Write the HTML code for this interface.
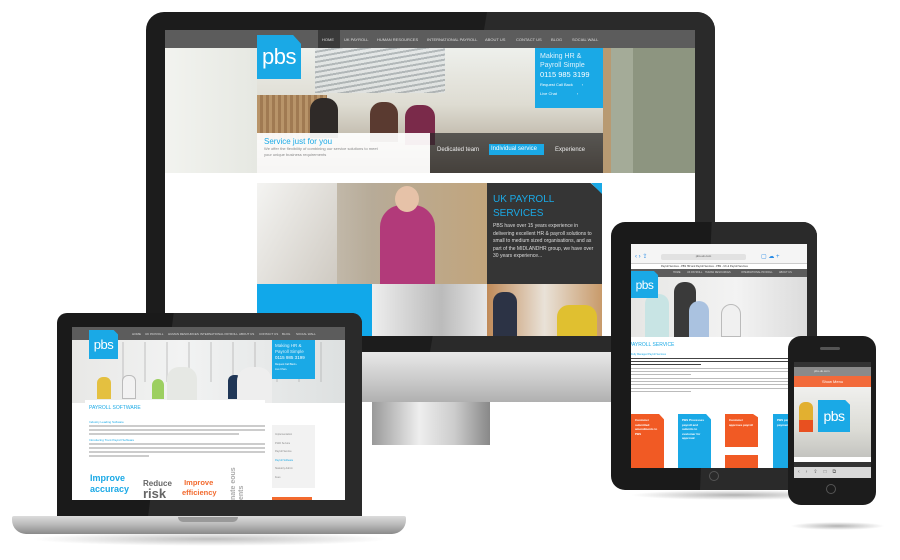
<!DOCTYPE html>
<html><head><meta charset="utf-8"><style>
*{margin:0;padding:0;box-sizing:border-box}
body{width:900px;height:560px;background:#fff;position:relative;overflow:hidden;font-family:"Liberation Sans",sans-serif}
.a{position:absolute}
.n{position:absolute;font-size:4px;color:#ddd;white-space:nowrap}
.n3{position:absolute;font-size:3px;color:#ddd;white-space:nowrap}
.logo{background:#1aa9e6;color:#fff;font-family:"Liberation Sans",sans-serif;display:flex;align-items:center;justify-content:center;letter-spacing:-0.5px}
.line{position:absolute;height:1.5px;background:#bbb}
</style></head><body>

<!-- monitor stand -->
<div class="a" style="left:372px;top:400px;width:118px;height:45px;background:linear-gradient(90deg,#999,#eee 40%,#ccc 70%,#888)"></div>
<!-- monitor -->
<div class="a" style="left:146px;top:12px;width:569px;height:340px;background:#1c1c1c;border-radius:18px 18px 0 0"></div>
<div class="a" style="left:430px;top:12px;width:285px;height:340px;background:#2a2a2a;border-radius:0 18px 0 0;clip-path:polygon(20% 0,100% 0,100% 100%,0 100%)"></div>
<div class="a" style="left:146px;top:352px;width:569px;height:50px;background:linear-gradient(#e8e8e8,#c8c8c8 60%,#b0b0b0)"></div>
<!-- monitor screen -->
<div class="a" style="left:165px;top:30px;width:530px;height:306px;background:#fff;overflow:hidden">
 <div class="a" style="left:0;top:0;width:530px;height:18px;background:#5c5c5c"></div>
 <div class="a" style="left:153px;top:0;width:22px;height:18px;background:#3a3a3a"></div>
 <div class="n" style="left:157px;top:7px">HOME</div>
 <div class="n" style="left:179px;top:7px">UK PAYROLL</div>
 <div class="n" style="left:212px;top:7px">HUMAN RESOURCES</div>
 <div class="n" style="left:262px;top:7px">INTERNATIONAL PAYROLL</div>
 <div class="n" style="left:320px;top:7px">ABOUT US</div>
 <div class="n" style="left:351px;top:7px">CONTACT US</div>
 <div class="n" style="left:386px;top:7px">BLOG</div>
 <div class="n" style="left:407px;top:7px">SOCIAL WALL</div>
 <!-- hero -->
 <div class="a" style="left:0;top:18px;width:92px;height:125px;background:linear-gradient(90deg,#f2f3ef,#e6e8e2)"></div>
 <div class="a" style="left:92px;top:18px;width:346px;height:125px;background:linear-gradient(180deg,#eef0ec,#dedcd2 45%,#c4bdb0 70%,#8a7a6a)"></div>
 <div class="a" style="left:150px;top:18px;width:130px;height:45px;background:repeating-linear-gradient(170deg,#dfe3e4 0 3px,#9aa2a6 3px 5px);opacity:.7"></div>
 <div class="a" style="left:92px;top:65px;width:70px;height:45px;background:repeating-linear-gradient(90deg,#b89469 0 3px,#a07a52 3px 6px)"></div>
 <div class="a" style="left:145px;top:68px;width:28px;height:40px;background:#2f2a28;border-radius:12px 12px 0 0"></div>
 <div class="a" style="left:205px;top:72px;width:28px;height:40px;background:#5a3a30;border-radius:12px 12px 0 0"></div>
 <div class="a" style="left:240px;top:75px;width:30px;height:40px;background:#7a2a4a;border-radius:12px 12px 0 0"></div>
 <div class="a" style="left:438px;top:18px;width:92px;height:125px;background:linear-gradient(90deg,#b89a72 0 8px,#a4ab98 8px 30px,#8d9580 30px)"></div>
 <div class="a logo" style="left:92px;top:5px;width:44px;height:44px;font-size:22px;clip-path:polygon(0 0,82% 0,100% 20%,100% 100%,0 100%)">pbs</div>
 <div class="a" style="left:370px;top:18px;width:68px;height:60px;background:#1aa9e6;padding:4px 5px;color:#fff">
  <div style="font-size:7px;color:#dff2fc;line-height:9px">Making HR &amp;<br>Payroll Simple</div>
  <div style="font-size:7.5px;line-height:9px">0115 985 3199</div>
  <div style="font-size:4px;margin-top:3px">Request Call Back &nbsp;&nbsp;&nbsp;&nbsp;&nbsp;&nbsp;&nbsp;›</div>
  <div style="font-size:4px;margin-top:4px">Live Chat &nbsp;&nbsp;&nbsp;&nbsp;&nbsp;&nbsp;&nbsp;&nbsp;&nbsp;&nbsp;&nbsp;&nbsp;&nbsp;&nbsp;&nbsp;&nbsp;&nbsp;›</div>
 </div>
 <div class="a" style="left:92px;top:103px;width:173px;height:40px;background:rgba(255,255,255,.93);padding:4px 7px">
  <div style="font-size:8px;color:#1aa9e6">Service just for you</div>
  <div style="font-size:4px;color:#888;line-height:6px">We offer the flexibility of combining our service solutions to meet<br>your unique business requirements</div>
 </div>
 <div class="a" style="left:265px;top:103px;width:173px;height:40px;background:rgba(40,40,40,.7)"></div>
 <div class="a" style="left:272px;top:117px;font-size:6px;color:#eee">Dedicated team</div>
 <div class="a" style="left:324px;top:114px;width:55px;height:11px;background:#1aa9e6;font-size:6px;color:#fff;padding:2px">Individual service</div>
 <div class="a" style="left:390px;top:117px;font-size:6px;color:#eee">Experience</div>
 <!-- lower -->
 <div class="a" style="left:92px;top:153px;width:230px;height:101px;background:linear-gradient(90deg,#d9d6cf,#b7ab98 50%,#c2a57c)"></div>
 <div class="a" style="left:92px;top:153px;width:80px;height:101px;background:linear-gradient(120deg,#f4f4f2,#cfcac2)"></div>
 <div class="a" style="left:215px;top:175px;width:55px;height:79px;background:#b23a7a;border-radius:22px 22px 0 0"></div>
 <div class="a" style="left:230px;top:156px;width:24px;height:26px;background:#e6c2a8;border-radius:50%"></div>
 <div class="a" style="left:322px;top:153px;width:115px;height:101px;background:#353535;padding:10px 6px;clip-path:polygon(0 0,90% 0,100% 10%,100% 100%,0 100%)">
  <div style="font-size:10px;color:#1aa9e6;line-height:14px">UK PAYROLL<br>SERVICES</div>
  <div style="font-size:5px;color:#ddd;line-height:7.5px;margin-top:2px">PBS have over 15 years experience in delivering excellent HR &amp; payroll solutions to small to medium sized organisations, and as part of the MIDLANDHR group, we have over 30 years experience...</div>
 </div>
 <div class="a" style="left:426px;top:153px;width:11px;height:11px;background:#1aa9e6;clip-path:polygon(0 0,100% 0,100% 100%)"></div>
 <div class="a" style="left:92px;top:254px;width:115px;height:52px;background:#11a8ea"></div>
 <div class="a" style="left:207px;top:254px;width:115px;height:52px;background:linear-gradient(90deg,#eee,#bbb 60%,#e6e6e6)"></div>
 <div class="a" style="left:322px;top:254px;width:115px;height:52px;background:linear-gradient(90deg,#c08a58,#e9e2d8 50%,#c89a6a)"></div>
 <div class="a" style="left:328px;top:262px;width:24px;height:44px;background:#2c3345;border-radius:10px 10px 0 0"></div>
 <div class="a" style="left:392px;top:275px;width:40px;height:31px;background:#e0c030;border-radius:12px 12px 0 0"></div>
</div>

<!-- laptop -->
<div class="a" style="left:30px;top:532px;width:360px;height:14px;background:radial-gradient(ellipse,rgba(0,0,0,.25),rgba(0,0,0,0) 70%)"></div>
<div class="a" style="left:57px;top:313px;width:305px;height:204px;background:#1a1a1a;border-radius:10px 10px 0 0"></div>
<div class="a" style="left:148px;top:313px;width:214px;height:204px;background:#2a2a2a;border-radius:0 10px 0 0;clip-path:polygon(12% 0,100% 0,100% 100%,0 100%)"></div>
<div class="a" style="left:12px;top:516px;width:394px;height:18px;background:linear-gradient(#dcdcdc,#b8b8b8 50%,#8a8a8a);border-radius:2px 2px 14px 14px"></div>
<div class="a" style="left:178px;top:517px;width:60px;height:5px;background:#999;border-radius:0 0 5px 5px"></div>
<div class="a" style="left:72px;top:327px;width:273px;height:173px;background:#fff;overflow:hidden">
 <div class="a" style="left:0;top:0;width:273px;height:13px;background:#5c5c5c"></div>
 <div class="n3" style="left:60px;top:5px">HOME</div>
 <div class="n3" style="left:73px;top:5px">UK PAYROLL</div>
 <div class="n3" style="left:96px;top:5px">HUMAN RESOURCES</div>
 <div class="n3" style="left:128px;top:5px">INTERNATIONAL PAYROLL</div>
 <div class="n3" style="left:167px;top:5px">ABOUT US</div>
 <div class="n3" style="left:187px;top:5px">CONTACT US</div>
 <div class="n3" style="left:210px;top:5px">BLOG</div>
 <div class="n3" style="left:224px;top:5px">SOCIAL WALL</div>
 <div class="a" style="left:0;top:13px;width:273px;height:63px;background:linear-gradient(90deg,#e8e8e6,#f2f3f3 40%,#dde0e0)"></div>
 <div class="a" style="left:30px;top:15px;width:230px;height:40px;background:repeating-linear-gradient(90deg,transparent 0 20px,rgba(180,180,180,.4) 20px 22px)"></div>
 <div class="a" style="left:25px;top:50px;width:14px;height:22px;background:#e4c040;border-radius:6px 6px 0 0"></div>
 <div class="a" style="left:50px;top:48px;width:14px;height:24px;background:#f2f2f2;border-radius:6px 6px 0 0;border:1px solid #bbb"></div>
 <div class="a" style="left:80px;top:52px;width:12px;height:20px;background:#9ccf60;border-radius:6px 6px 0 0"></div>
 <div class="a" style="left:95px;top:40px;width:30px;height:36px;background:#e6e8e4;border-radius:12px 12px 0 0"></div>
 <div class="a" style="left:156px;top:48px;width:14px;height:24px;background:#1f3656;border-radius:6px 6px 0 0"></div>
 <div class="a" style="left:165px;top:40px;width:35px;height:36px;background:#eee;border-radius:14px 14px 0 0"></div>
 <div class="a logo" style="left:17px;top:3px;width:29px;height:29px;font-size:13px;clip-path:polygon(0 0,85% 0,100% 15%,100% 100%,0 100%)">pbs</div>
 <div class="a" style="left:200px;top:13px;width:43px;height:39px;background:#1aa9e6;padding:3px;color:#fff">
  <div style="font-size:4.5px;line-height:6px;color:#dff2fc">Making HR &amp;<br>Payroll Simple</div>
  <div style="font-size:4.5px;line-height:6px">0115 985 3199</div>
  <div style="font-size:2.5px;margin-top:2px">Request Call Back ›</div>
  <div style="font-size:2.5px;margin-top:2px">Live Chat ›</div>
 </div>
 <div class="a" style="left:13px;top:73px;width:180px;height:100px;background:#fff"></div>
 <div class="a" style="left:17px;top:78px;font-size:5px;color:#1aa9e6">PAYROLL SOFTWARE</div>
 <div class="a" style="left:17px;top:93px;font-size:3px;color:#1aa9e6">Industry Leading Software</div>
 <div class="line" style="left:17px;top:98px;width:176px;background:#ccc"></div>
 <div class="line" style="left:17px;top:102px;width:176px;background:#ccc"></div>
 <div class="line" style="left:17px;top:106px;width:150px;background:#ccc"></div>
 <div class="a" style="left:17px;top:111px;font-size:3px;color:#1aa9e6">Introducing Trent Payroll Software</div>
 <div class="line" style="left:17px;top:116px;width:176px;background:#ccc"></div>
 <div class="line" style="left:17px;top:120px;width:176px;background:#ccc"></div>
 <div class="line" style="left:17px;top:124px;width:176px;background:#ccc"></div>
 <div class="line" style="left:17px;top:128px;width:60px;background:#ccc"></div>
 <div class="a" style="left:200px;top:98px;width:43px;height:63px;background:#f2f2f2"></div>
 <div class="a" style="left:203px;top:104px;font-size:2.5px;color:#888;line-height:8.5px">Implementation<br>P11D Service<br>Payroll Service<br><span style="color:#1aa9e6">Payroll Software</span><br>Statutory Admin<br>Fees</div>
 <div class="a" style="left:200px;top:170px;width:40px;height:5px;background:#f26a2e"></div>
 <div class="a" style="left:18px;top:146px;font-size:9px;font-weight:bold;color:#1aa9e6;line-height:11px">Improve<br>accuracy</div>
 <div class="a" style="left:71px;top:152px;font-size:8px;font-weight:bold;color:#666;line-height:10px">Reduce<br><span style="font-size:13px">risk</span></div>
 <div class="a" style="left:110px;top:151px;font-size:7.5px;font-weight:bold;color:#f26a2e;line-height:10px">&nbsp;Improve<br>efficiency</div>
 <div class="a" style="left:158px;top:140px;font-size:7px;font-weight:bold;color:#aaa;writing-mode:vertical-rl;transform:rotate(180deg);line-height:8px">nate eous ents</div>
</div>

<!-- tablet -->
<div class="a" style="left:630px;top:490px;width:210px;height:10px;background:radial-gradient(ellipse,rgba(0,0,0,.3),rgba(0,0,0,0) 70%)"></div>
<div class="a" style="left:611px;top:222px;width:206px;height:268px;background:#1a1a1a;border-radius:14px"></div>
<div class="a" style="left:700px;top:222px;width:117px;height:268px;background:#2a2a2a;border-radius:0 14px 14px 0;clip-path:polygon(10% 0,100% 0,100% 100%,0 100%)"></div>
<div class="a" style="left:709px;top:471px;width:10px;height:10px;border:1px solid #555;border-radius:50%"></div>
<div class="a" style="left:631px;top:244px;width:176px;height:224px;background:#fff;overflow:hidden">
 <div class="a" style="left:0;top:0;width:176px;height:20px;background:#f5f5f5;border-bottom:1px solid #ccc"></div>
 <div class="a" style="left:30px;top:10px;width:85px;height:6px;background:#e2e2e2;border-radius:2px;font-size:3px;color:#555;text-align:center">pbs-uk.com</div>
 <div class="a" style="left:4px;top:9px;font-size:6px;color:#2a8ce6">‹ › ⇪</div>
 <div class="a" style="left:130px;top:9px;font-size:6px;color:#2a8ce6">▢ ☁ +</div>
 <div class="a" style="left:30px;top:21px;font-size:2.5px;color:#333;white-space:nowrap">Payroll Services - PBS HR and Payroll Services - PBS - UK &amp; Payroll Services</div>
 <div class="a" style="left:0;top:25px;width:176px;height:8px;background:#5c5c5c"></div>
 <div class="n3" style="left:42px;top:27px;font-size:2.5px">HOME</div>
 <div class="n3" style="left:56px;top:27px;font-size:2.5px">UK PAYROLL</div>
 <div class="n3" style="left:74px;top:27px;font-size:2.5px">HUMAN RESOURCES</div>
 <div class="n3" style="left:110px;top:27px;font-size:2.5px">INTERNATIONAL PAYROLL</div>
 <div class="n3" style="left:148px;top:27px;font-size:2.5px">ABOUT US</div>
 <div class="a" style="left:0;top:33px;width:176px;height:60px;background:linear-gradient(90deg,#e6e6e4,#f3f3f3 60%,#dcdcdc)"></div>
 <div class="a" style="left:14px;top:50px;width:24px;height:43px;background:#c8e4e4;border-radius:10px 10px 0 0"></div>
 <div class="a" style="left:43px;top:38px;width:22px;height:55px;background:#3a3a3a;border-radius:10px 10px 0 0"></div>
 <div class="a" style="left:58px;top:57px;width:20px;height:36px;background:#aac2e0;border-radius:10px 10px 0 0"></div>
 <div class="a" style="left:90px;top:60px;width:20px;height:33px;background:#f0f0f0;border-radius:10px 10px 0 0;border:1px solid #bbb"></div>
 <div class="a logo" style="left:0;top:27px;width:27px;height:27px;font-size:12px;clip-path:polygon(0 0,85% 0,100% 15%,100% 100%,0 100%)">pbs</div>
 <div class="a" style="left:-2px;top:98px;font-size:5px;color:#1aa9e6">PAYROLL SERVICE</div>
 <div class="a" style="left:0;top:109px;font-size:2.5px;color:#1aa9e6">Fully Managed Payroll Services</div>
 <div class="line" style="left:0;top:114px;width:176px;background:#444;height:1px"></div>
 <div class="line" style="left:0;top:117px;width:176px;background:#444;height:1px"></div>
 <div class="line" style="left:0;top:120px;width:70px;background:#444;height:1px"></div>
 <div class="line" style="left:0;top:124px;width:176px;height:1px"></div>
 <div class="line" style="left:0;top:127px;width:176px;height:1px"></div>
 <div class="line" style="left:0;top:130px;width:60px;height:1px"></div>
 <div class="line" style="left:0;top:134px;width:176px;height:1px"></div>
 <div class="line" style="left:0;top:137px;width:176px;height:1px"></div>
 <div class="line" style="left:0;top:140px;width:176px;height:1px"></div>
 <div class="line" style="left:0;top:144px;width:176px;height:1px"></div>
 <div class="line" style="left:0;top:147px;width:60px;height:1px"></div>
 <div class="a" style="left:0;top:170px;width:33px;height:54px;background:#f15a24;font-size:3px;color:#fff;padding:4px;font-weight:bold;line-height:4.5px;clip-path:polygon(0 0,85% 0,100% 10%,100% 100%,0 100%)">Customer submitted amendments to PBS</div>
 <div class="a" style="left:47px;top:170px;width:33px;height:54px;background:#1aa9e6;font-size:3px;color:#fff;padding:4px;font-weight:bold;line-height:4.5px;clip-path:polygon(0 0,85% 0,100% 10%,100% 100%,0 100%)">PBS Processes payroll and submits to customer for approval</div>
 <div class="a" style="left:94px;top:170px;width:33px;height:33px;background:#f15a24;font-size:3px;color:#fff;padding:4px;font-weight:bold;line-height:4.5px;clip-path:polygon(0 0,85% 0,100% 10%,100% 100%,0 100%)">Customer approves payroll</div>
 <div class="a" style="left:94px;top:211px;width:33px;height:13px;background:#f15a24"></div>
 <div class="a" style="left:142px;top:170px;width:34px;height:54px;background:#1aa9e6;font-size:3px;color:#fff;padding:4px;font-weight:bold;line-height:4.5px">PBS pays BACS payments</div>
</div>

<!-- phone -->
<div class="a" style="left:790px;top:522px;width:95px;height:8px;background:radial-gradient(ellipse,rgba(0,0,0,.3),rgba(0,0,0,0) 70%)"></div>
<div class="a" style="left:788px;top:336px;width:88px;height:169px;background:#1c1c1c;border-radius:13px"></div>
<div class="a" style="left:820px;top:347px;width:20px;height:3px;background:#555;border-radius:2px"></div>
<div class="a" style="left:826px;top:484px;width:10px;height:10px;border:1px solid #555;border-radius:50%"></div>
<div class="a" style="left:794px;top:362px;width:77px;height:116px;background:#fff;overflow:hidden">
 <div class="a" style="left:0;top:0;width:77px;height:5px;background:#333"></div>
 <div class="a" style="left:0;top:5px;width:77px;height:9px;background:#8a8a8a"></div>
 <div class="a" style="left:20px;top:7px;font-size:3px;color:#eee">pbs-uk.com</div>
 <div class="a" style="left:0;top:14px;width:77px;height:11px;background:#f26a3a;font-size:4px;color:#fff;text-align:center;padding-top:3px">Show Menu</div>
 <div class="a" style="left:0;top:25px;width:77px;height:70px;background:linear-gradient(180deg,#f0f0ee,#dcdcd6 60%,#c4c4c0)"></div>
 <div class="a" style="left:5px;top:40px;width:14px;height:25px;background:#e2b030;border-radius:6px 6px 0 0"></div>
 <div class="a" style="left:5px;top:58px;width:14px;height:12px;background:#e85020"></div>
 <div class="a logo" style="left:24px;top:38px;width:32px;height:32px;font-size:14px;clip-path:polygon(0 0,85% 0,100% 15%,100% 100%,0 100%)">pbs</div>
 <div class="a" style="left:0;top:100px;width:77px;height:5px;background:#333"></div>
 <div class="a" style="left:0;top:105px;width:77px;height:11px;background:#d8d8d8;font-size:5px;color:#666;padding:2px 4px;letter-spacing:6px">‹›⇪□⧉</div>
</div>
</body></html>
